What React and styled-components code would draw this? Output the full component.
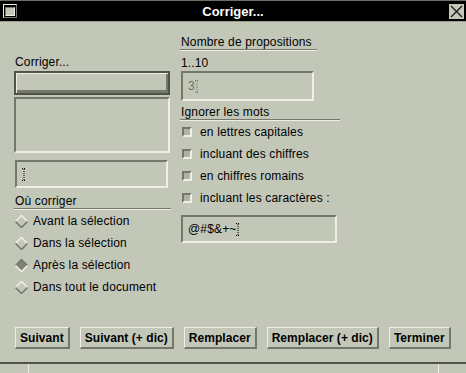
import React from 'react';
import styled, { createGlobalStyle } from 'styled-components';

const BG = '#c2c7b8';
const LIGHT = '#eef0e8';
const DARK = '#73786b';
const DARKER = '#4f5349';

const GlobalStyle = createGlobalStyle`
  html, body { margin: 0; padding: 0; background: ${BG}; }
  body {
    font-family: "Liberation Sans", Arial, sans-serif;
    font-size: 12px;
    letter-spacing: 0.15px;
    color: #000;
  }
`;

const Window = styled.div`
  width: 466px;
  height: 373px;
  display: flex;
  flex-direction: column;
  overflow: hidden;
  background: ${BG};
`;

const TitleBar = styled.div`
  height: 20px;
  background: #000;
  border-top: 1px solid #6b6f66;
  border-bottom: 1px solid #9a9f92;
  display: flex;
  align-items: center;
  padding: 0 2px 0 3px;
`;

const Title = styled.div`
  flex: 1;
  text-align: center;
  color: #fff;
  font-weight: bold;
  font-size: 13px;
  letter-spacing: 0;
`;

const MenuBox = styled.div`
  box-sizing: border-box;
  width: 14px;
  height: 14px;
  border: 1px solid ${LIGHT};
  border-right-color: ${DARK};
  border-bottom-color: ${DARK};
  display: flex;
  align-items: center;
  justify-content: center;
  &::after {
    content: '';
    box-sizing: border-box;
    width: 10px;
    height: 9px;
    background: ${BG};
    border: 1px solid ${LIGHT};
    border-top-color: ${DARK};
    border-left-color: ${DARK};
  }
`;

const CloseBox = styled.div`
  width: 15px;
  height: 15px;
  background: ${BG};
  display: flex;
  align-items: center;
  justify-content: center;
`;

const Body = styled.div`
  flex: 1;
  display: flex;
  flex-direction: column;
  padding: 13px 0 13px 14px;
  border-bottom: 2px solid ${DARKER};
`;

const Columns = styled.div`
  display: grid;
  grid-template-columns: 156px 160px;
  column-gap: 10px;
  align-items: start;
`;

const Column = styled.div`
  display: flex;
  flex-direction: column;
  padding-top: ${p => p.$top || 0}px;
`;

const Label = styled.div`
  line-height: 14px;
  margin-top: ${p => p.$mt || 0}px;
  padding-left: 1px;
`;

const SectionHead = styled.div`
  line-height: 14px;
  width: ${p => p.$w}px;
  margin-top: ${p => p.$mt || 0}px;
  padding-left: 1px;
  border-bottom: 1px solid ${DARK};
  box-shadow: 0 1px 0 ${LIGHT};
  margin-bottom: 1px;
`;

const Entry = styled.div`
  box-sizing: border-box;
  width: ${p => p.$w}px;
  height: ${p => p.$h}px;
  margin-top: ${p => p.$mt || 0}px;
  margin-left: ${p => p.$ml || 0}px;
  border: 2px solid ${LIGHT};
  border-top-color: ${DARK};
  border-left-color: ${DARK};
  display: flex;
  align-items: center;
  padding-left: 5px;
  color: ${p => (p.$dim ? '#6d7266' : '#000')};
`;

const FocusBox = styled.div`
  box-sizing: border-box;
  width: 156px;
  height: 24px;
  margin-top: 2px;
  border: 2px solid ${DARKER};
  box-shadow: inset 1px 1px 0 ${LIGHT}, inset -2px -3px 0 ${DARK};
`;

const ListBox = styled.div`
  box-sizing: border-box;
  width: 156px;
  height: 56px;
  margin-top: 2px;
  border: 2px solid ${LIGHT};
  border-top-color: ${DARK};
  border-left-color: ${DARK};
`;

const OptionRow = styled.div`
  height: 22px;
  display: flex;
  align-items: center;
  gap: ${p => p.$gap}px;
  padding-left: ${p => p.$pl}px;
`;

const Check = styled.span`
  box-sizing: border-box;
  width: 10px;
  height: 10px;
  background: #aeb3a4;
  border: 2px solid ${DARK};
  border-right-color: ${LIGHT};
  border-bottom-color: ${LIGHT};
`;

const ButtonRow = styled.div`
  margin-top: auto;
  margin-left: 1px;
  display: flex;
  gap: 10px;
`;

const Button = styled.div`
  box-sizing: border-box;
  height: 22px;
  padding: 0 4px;
  display: flex;
  align-items: center;
  font-weight: bold;
  letter-spacing: 0.05px;
  border: 2px solid ${LIGHT};
  border-right-color: ${DARK};
  border-bottom-color: ${DARK};
  border-left-width: 1px;
  border-top-width: 1px;
`;

const Footer = styled.div`
  height: 9px;
  display: grid;
  grid-template-columns: 28px 1fr 28px;
  & > div + div {
    border-left: 1px solid ${LIGHT};
  }
`;

const Cursor = ({ color = '#000' }) => (
  <svg width="5" height="13" viewBox="0 0 5 13">
    <path d="M0 0.5 H4 M0 12.5 H4 M2 1 V12" stroke={color} strokeWidth="1" strokeDasharray="1 1" fill="none" />
  </svg>
);

const Diamond = ({ on }) => (
  <svg width="13" height="13" viewBox="0 0 13 13">
    <polygon points="6.5,0.5 12.5,6.5 6.5,12.5 0.5,6.5" fill={on ? '#7e8376' : BG} />
    <polyline points="0.5,6.5 6.5,0.5 12.5,6.5" fill="none" stroke={on ? DARK : LIGHT} strokeWidth="1.5" />
    <polyline points="0.5,6.5 6.5,12.5 12.5,6.5" fill="none" stroke={on ? LIGHT : DARK} strokeWidth="1.5" />
  </svg>
);

const radios = [
  ['Avant la sélection', false],
  ['Dans la sélection', false],
  ['Après la sélection', true],
  ['Dans tout le document', false],
];

const checks = [
  'en lettres capitales',
  'incluant des chiffres',
  'en chiffres romains',
  'incluant les caractères :',
];

const buttons = ['Suivant', 'Suivant (+ dic)', 'Remplacer', 'Remplacer (+ dic)', 'Terminer'];

export default function App() {
  return (
    <Window>
      <GlobalStyle />
      <TitleBar>
        <MenuBox />
        <Title>Corriger...</Title>
        <CloseBox>
          <svg width="13" height="13" viewBox="0 0 13 13">
            <path d="M1 1 L12 12 M12 1 L1 12" stroke="#1c1c1c" strokeWidth="1.4" />
          </svg>
        </CloseBox>
      </TitleBar>
      <Body>
        <Columns>
          <Column $top={20}>
            <Label>Corriger...</Label>
            <FocusBox />
            <ListBox />
            <Entry $w={153} $h={28} $mt={7} $ml={1}>
              <Cursor />
            </Entry>
            <SectionHead $w={156} $mt={6}>Où corriger</SectionHead>
            {radios.map(([t, on]) => (
              <OptionRow key={t} $gap={5} $pl={1}>
                <Diamond on={on} />
                <span>{t}</span>
              </OptionRow>
            ))}
          </Column>
          <Column>
            <SectionHead $w={136}>Nombre de propositions</SectionHead>
            <Label $mt={5}>1..10</Label>
            <Entry $w={133} $h={30} $mt={1} $ml={1} $dim>
              3<Cursor color="#6d7266" />
            </Entry>
            <SectionHead $w={159} $mt={4}>Ignorer les mots</SectionHead>
            {checks.map(t => (
              <OptionRow key={t} $gap={8} $pl={2}>
                <Check />
                <span>{t}</span>
              </OptionRow>
            ))}
            <Entry $w={156} $h={28} $mt={6} $ml={1}>
              @#$&amp;+~<Cursor />
            </Entry>
          </Column>
        </Columns>
        <ButtonRow>
          {buttons.map(b => (
            <Button key={b}>{b}</Button>
          ))}
        </ButtonRow>
      </Body>
      <Footer>
        <div />
        <div />
        <div />
      </Footer>
    </Window>
  );
}
